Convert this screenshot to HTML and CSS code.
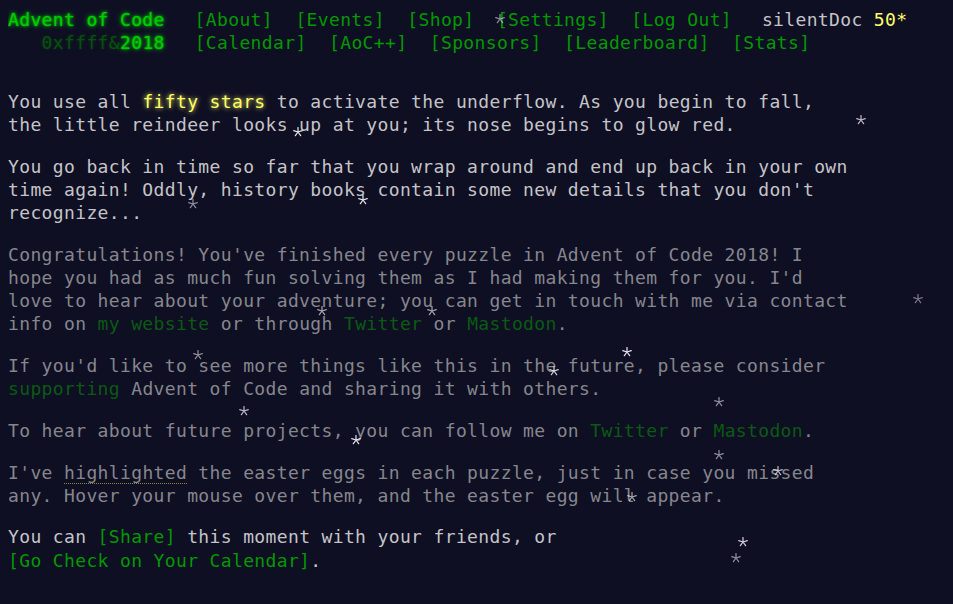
FILE: index.html
```html
<!DOCTYPE html>
<html lang="en">
<head>
<meta charset="utf-8">
<title>Advent of Code 2018</title>
<link rel="stylesheet" href="styles.css">
</head>
<body>
<header>
  <div class="row">
    <h1 class="title-global"><a href="#">Advent of Code</a></h1>
    <nav>
      <ul>
        <li><a href="#">[About]</a></li>
        <li><a href="#">[Events]</a></li>
        <li><a href="#">[Shop]</a></li>
        <li><a href="#">[Settings]</a></li>
        <li><a href="#">[Log Out]</a></li>
      </ul>
    </nav>
    <div class="user">silentDoc <span class="star-count">50*</span></div>
  </div>
  <div class="row">
    <h1 class="title-event">&nbsp;&nbsp;&nbsp;<span class="title-event-wrap">0xffff&amp;</span><a href="#">2018</a></h1>
    <nav>
      <ul>
        <li><a href="#">[Calendar]</a></li>
        <li><a href="#">[AoC++]</a></li>
        <li><a href="#">[Sponsors]</a></li>
        <li><a href="#">[Leaderboard]</a></li>
        <li><a href="#">[Stats]</a></li>
      </ul>
    </nav>
  </div>
</header>
<main>
  <article>
    <p>You use all <em class="gold">fifty stars</em> to activate the underflow. As you begin to fall, the little reindeer looks up at you; its nose begins to glow red.</p>
    <p>You go back in time so far that you wrap around and end up back in your own time again! Oddly, history books contain some new details that you don't recognize...</p>
    <p class="quiet">Congratulations! You've finished every puzzle in Advent of Code 2018! I hope you had as much fun solving them as I had making them for you. I'd love to hear about your adventure; you can get in touch with me via contact info on <a href="#">my website</a> or through <a href="#">Twitter</a> or <a href="#">Mastodon</a>.</p>
    <p class="quiet">If you'd like to see more things like this in the future, please consider <a href="#">supporting</a> Advent of Code and sharing it with others.</p>
    <p class="quiet">To hear about future projects, you can follow me on <a href="#">Twitter</a> or <a href="#">Mastodon</a>.</p>
    <p class="quiet">I've <span class="egg">highlighted</span> the easter eggs in each puzzle, just in case you missed any. Hover your mouse over them, and the easter egg will appear.</p>
    <p>You can <a href="#" class="nowrap">[Share]</a> this moment with your friends, or <a href="#" class="nowrap">[Go Check on Your Calendar]</a>.</p>
  </article>
</main>
<div class="snow" aria-hidden="true">
  <svg width="0" height="0" class="defs">
    <defs>
      <symbol id="flake" viewBox="-5 -5 10 10">
        <path d="M0 0L0 -4.5M0 0L4.28 -1.39M0 0L2.65 3.64M0 0L-2.65 3.64M0 0L-4.28 -1.39" stroke="#e8e8f0" stroke-width="1.2" stroke-linecap="round" fill="none"/>
      </symbol>
    </defs>
  </svg>
  <svg class="flake" style="left:293px;top:127px;opacity:1"><use href="#flake"/></svg>
  <svg class="flake" style="left:565px;top:-5px;opacity:.7"><use href="#flake"/></svg>
  <svg class="flake" style="left:495px;top:14px;opacity:.6"><use href="#flake"/></svg>
  <svg class="flake" style="left:856px;top:115px;opacity:.8"><use href="#flake"/></svg>
  <svg class="flake" style="left:188px;top:199px;opacity:.6"><use href="#flake"/></svg>
  <svg class="flake" style="left:358px;top:195px;opacity:1"><use href="#flake"/></svg>
  <svg class="flake" style="left:913px;top:294px;opacity:.5"><use href="#flake"/></svg>
  <svg class="flake" style="left:317px;top:306px;opacity:.7"><use href="#flake"/></svg>
  <svg class="flake" style="left:427px;top:306px;opacity:.7"><use href="#flake"/></svg>
  <svg class="flake" style="left:193px;top:350px;opacity:.6"><use href="#flake"/></svg>
  <svg class="flake" style="left:622px;top:347px;opacity:1"><use href="#flake"/></svg>
  <svg class="flake" style="left:549px;top:366px;opacity:.9"><use href="#flake"/></svg>
  <svg class="flake" style="left:714px;top:397px;opacity:.6"><use href="#flake"/></svg>
  <svg class="flake" style="left:239px;top:406px;opacity:.8"><use href="#flake"/></svg>
  <svg class="flake" style="left:351px;top:435px;opacity:1"><use href="#flake"/></svg>
  <svg class="flake" style="left:714px;top:450px;opacity:.6"><use href="#flake"/></svg>
  <svg class="flake" style="left:773px;top:466px;opacity:.8"><use href="#flake"/></svg>
  <svg class="flake" style="left:627px;top:492px;opacity:.7"><use href="#flake"/></svg>
  <svg class="flake" style="left:738px;top:537px;opacity:.9"><use href="#flake"/></svg>
  <svg class="flake" style="left:731px;top:553px;opacity:.6"><use href="#flake"/></svg>
</div>
</body>
</html>
```

FILE: styles.css
```css
html, body {
  background: #0f0f23;
}
body {
  margin: 8px;
  color: #c4c4c8;
  font-family: "DejaVu Sans Mono", "Liberation Mono", monospace;
  font-size: 18px;
  letter-spacing: 0.36px;
  line-height: 23.1px;
  position: relative;
  overflow: hidden;
}
a {
  color: #009900;
  text-decoration: none;
}
header {
  white-space: nowrap;
  margin-bottom: 36px;
}
.row {
  display: flex;
  align-items: baseline;
}
h1 {
  font-size: 1em;
  font-weight: normal;
  margin: 0;
  padding-right: 18.67px;
}
.title-global a,
.title-event a {
  color: #00cc00;
  text-shadow: 0 0 2px #00cc00, 0 0 5px #00cc00;
}
.title-event-wrap {
  color: #0a4f12;
  text-shadow: 0 0 3px #063a0c;
  white-space: pre;
}
nav ul {
  list-style: none;
  margin: 0;
  padding: 0;
  display: flex;
}
nav li {
  padding: 0 11.2px;
}
.user {
  padding-left: 18.67px;
}
.star-count {
  color: #ffff66;
}
article {
  width: 845px;
}
article p {
  margin: 18.67px 0;
}
em.gold {
  font-style: normal;
  color: #ffff66;
  text-shadow: 0 0 5px #ffff66;
}
.quiet {
  color: #86868e;
}
.quiet a {
  color: #0a5a13;
}
.egg {
  border-bottom: 1px dotted #8a8a40;
}
.nowrap {
  white-space: nowrap;
}
.snow {
  position: absolute;
  left: -8px;
  top: -8px;
  width: 953px;
  height: 604px;
  pointer-events: none;
}
.defs {
  position: absolute;
}
.flake {
  position: absolute;
  width: 10px;
  height: 10px;
}
```
